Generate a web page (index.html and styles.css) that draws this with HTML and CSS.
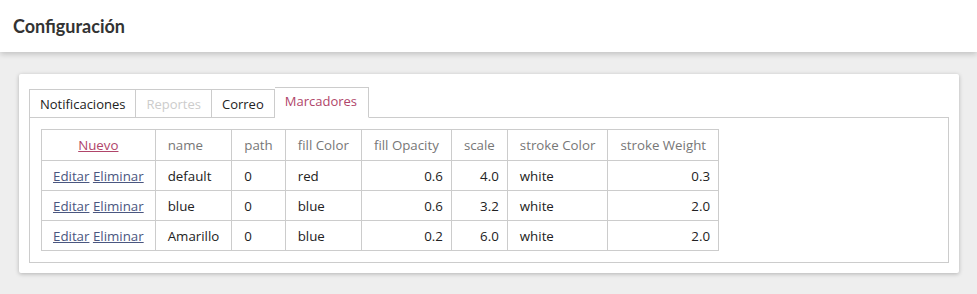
FILE: index.html
```html
<!DOCTYPE html>
<html lang="es">
<head>
    <meta charset="UTF-8">
    <title>Configuración</title>
    <link rel="stylesheet" href="styles.css">
</head>
<body>
<header class="page-header">
    <h1 class="page-title">Configuración</h1>
</header>

<main class="page-body">
    <div class="card">
        <ul class="tabs">
            <li class="tab">Notificaciones</li>
            <li class="tab disabled">Reportes</li>
            <li class="tab">Correo</li>
            <li class="tab active">Marcadores</li>
        </ul>
        <div class="tab-panel">
            <table class="grid">
                <thead>
                    <tr>
                        <th class="actions"><a href="#" class="link-new">Nuevo</a></th>
                        <th>name</th>
                        <th>path</th>
                        <th>fill Color</th>
                        <th>fill Opacity</th>
                        <th>scale</th>
                        <th>stroke Color</th>
                        <th>stroke Weight</th>
                    </tr>
                </thead>
                <tbody>
                    <tr>
                        <td class="actions"><a href="#">Editar</a> <a href="#">Eliminar</a></td>
                        <td>default</td>
                        <td>0</td>
                        <td>red</td>
                        <td class="num">0.6</td>
                        <td class="num">4.0</td>
                        <td>white</td>
                        <td class="num">0.3</td>
                    </tr>
                    <tr>
                        <td class="actions"><a href="#">Editar</a> <a href="#">Eliminar</a></td>
                        <td>blue</td>
                        <td>0</td>
                        <td>blue</td>
                        <td class="num">0.6</td>
                        <td class="num">3.2</td>
                        <td>white</td>
                        <td class="num">2.0</td>
                    </tr>
                    <tr>
                        <td class="actions"><a href="#">Editar</a> <a href="#">Eliminar</a></td>
                        <td>Amarillo</td>
                        <td>0</td>
                        <td>blue</td>
                        <td class="num">0.2</td>
                        <td class="num">6.0</td>
                        <td>white</td>
                        <td class="num">2.0</td>
                    </tr>
                </tbody>
            </table>
        </div>
    </div>
</main>
</body>
</html>
```

FILE: styles.css
```css
:root {
    --bg: #eeeeee;
    --panel: #ffffff;
    --border: #cccccc;
    --text: #222222;
    --muted: #777777;
    --accent: #b0456a;
    --link: #4a5680;
}

* {
    box-sizing: border-box;
    margin: 0;
    padding: 0;
}

body {
    font-family: "Open Sans", "Noto Sans", sans-serif;
    font-size: 13px;
    background-color: var(--bg);
    color: var(--text);
    height: 100vh;
}

.page-header {
    height: 52px;
    background-color: var(--panel);
    box-shadow: 0 2px 6px rgba(0, 0, 0, 0.2);
    display: flex;
    align-items: center;
    padding: 0 13px 1px;
    position: relative;
}

.page-title {
    font-family: Lato, sans-serif;
    font-size: 18px;
    font-weight: 700;
    color: #333;
}

.page-body {
    padding: 22px 18px 0 19px;
}

.card {
    background-color: var(--panel);
    border-radius: 2px;
    box-shadow: 0 1px 4px rgba(0, 0, 0, 0.25);
    padding: 13px 10px 10px;
}

/* Tabs */
.tabs {
    list-style: none;
    display: flex;
    align-items: flex-end;
    position: relative;
    z-index: 1;
    margin-bottom: -1px;
}

.tab {
    height: 29px;
    padding: 0 10px;
    border: 1px solid var(--border);
    border-right: none;
    display: flex;
    align-items: center;
    background-color: var(--panel);
}

.tab:nth-child(3) {
    border-right: 1px solid var(--border);
}

.tab.disabled {
    color: #cccccc;
}

.tab.active {
    height: 31px;
    padding: 0 11px 4px 10px;
    color: var(--accent);
    border-bottom-color: var(--panel);
    border-left: none;
    border-right: 1px solid var(--border);
}

.tab-panel {
    border: 1px solid var(--border);
    padding: 11px;
}

/* Table */
.grid {
    border-collapse: collapse;
    font-size: 13.3px;
}

.grid th,
.grid td {
    border: 1px solid var(--border);
    padding: 0 12px;
    height: 30px;
    text-align: left;
    font-weight: normal;
    white-space: nowrap;
}

.grid th {
    height: 31px;
    color: var(--muted);
}

.grid td.num {
    text-align: right;
    padding-right: 8px;
}

.grid .actions {
    text-align: center;
    padding: 0 11px;
}

.grid a {
    color: var(--link);
}

.grid a.link-new {
    color: var(--accent);
}
```
